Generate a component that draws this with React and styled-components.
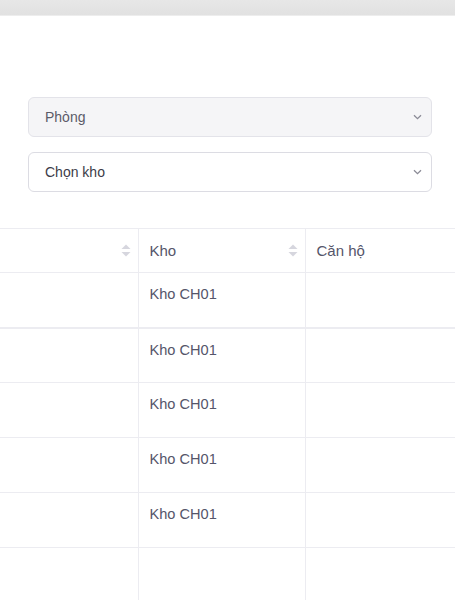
import React from "react";
import styled, { createGlobalStyle } from "styled-components";

const Global = createGlobalStyle`
  html, body {
    margin: 0;
    padding: 0;
    background: #ffffff;
    font-family: "Liberation Sans", Arial, sans-serif;
  }
`;

const TopBar = styled.div`
  height: 15px;
  background: linear-gradient(#e7e7e7, #e1e1e1);
  border-bottom: 1px solid #ededed;
`;

const Filters = styled.div`
  display: flex;
  flex-direction: column;
  gap: 15px;
  padding: 81px 23px 0 28px;
`;

const Select = styled.div`
  height: 38px;
  display: flex;
  align-items: center;
  justify-content: space-between;
  padding: 0 9px 0 16px;
  border: 1px solid ${(p) => (p.$filled ? "#e3e3e9" : "#dcdce3")};
  border-radius: 6px;
  background: ${(p) => (p.$filled ? "#f5f5f7" : "#ffffff")};
  color: ${(p) => (p.$filled ? "#5b5b68" : "#3c3c48")};
  font-size: 14px;
`;

const TableWrap = styled.div`
  margin-top: 36px;
  overflow: hidden;
`;

const Table = styled.table`
  width: 100%;
  border-collapse: collapse;
  table-layout: fixed;
  color: #55556a;
`;

const Th = styled.th`
  height: 44px;
  padding: 0 7px 0 11px;
  text-align: left;
  font-weight: normal;
  font-size: 15px;
  border-top: 1px solid #ececf1;
  border-bottom: 1px solid #ececf1;
  border-left: ${(p) => (p.$first ? "none" : "1px solid #ececf1")};
  box-sizing: border-box;
`;

const HeadInner = styled.div`
  display: flex;
  align-items: center;
  justify-content: space-between;
`;

const Td = styled.td`
  height: 55px;
  padding: 10px 11px 0;
  vertical-align: top;
  font-size: 14.6px;
  line-height: 22px;
  border-bottom: ${(p) => (p.$thick ? "2px solid #ececf1" : "1px solid #ececf1")};
  border-left: ${(p) => (p.$first ? "none" : "1px solid #ececf1")};
  box-sizing: border-box;
`;

const Chevron = () => (
  <svg width="9" height="6" viewBox="0 0 9 6" fill="none">
    <path d="M1 1.2 L4.5 4.6 L8 1.2" stroke="#8a8a96" strokeWidth="1.3" />
  </svg>
);

const SortIcon = () => (
  <svg width="10" height="13" viewBox="0 0 10 13">
    <path d="M5 0.5 L9.5 5 L0.5 5 Z" fill="#d6d6de" />
    <path d="M0.5 8 L9.5 8 L5 12.5 Z" fill="#d6d6de" />
  </svg>
);

const rows = ["Kho CH01", "Kho CH01", "Kho CH01", "Kho CH01", "Kho CH01", ""];

export default function App() {
  return (
    <>
      <Global />
      <TopBar />
      <Filters>
        <Select $filled>
          <span>Phòng</span>
          <Chevron />
        </Select>
        <Select>
          <span>Chọn kho</span>
          <Chevron />
        </Select>
      </Filters>
      <TableWrap>
        <Table>
          <colgroup>
            <col style={{ width: 138 }} />
            <col style={{ width: 167 }} />
            <col />
          </colgroup>
          <thead>
            <tr>
              <Th $first>
                <HeadInner>
                  <span />
                  <SortIcon />
                </HeadInner>
              </Th>
              <Th>
                <HeadInner>
                  <span>Kho</span>
                  <SortIcon />
                </HeadInner>
              </Th>
              <Th>Căn hộ</Th>
            </tr>
          </thead>
          <tbody>
            {rows.map((kho, i) => (
              <tr key={i}>
                <Td $first $thick={i === 0} />
                <Td $thick={i === 0}>{kho}</Td>
                <Td $thick={i === 0} />
              </tr>
            ))}
          </tbody>
        </Table>
      </TableWrap>
    </>
  );
}
